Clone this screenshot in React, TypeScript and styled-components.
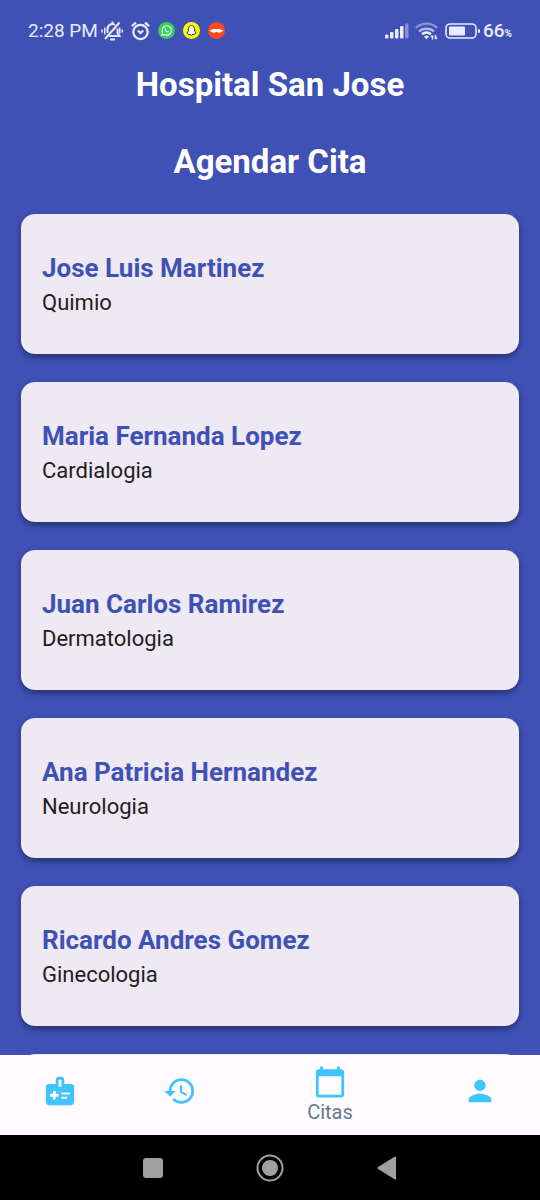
import React from 'react';
import styled, { createGlobalStyle } from 'styled-components';
import { MdCalendarToday, MdHistory, MdMedicalInformation, MdPerson } from 'react-icons/md';

const GlobalStyle = createGlobalStyle`
  * { box-sizing: border-box; }
  body {
    margin: 0;
    background: #3f51b5;
    font-family: Roboto, "Liberation Sans", sans-serif;
  }
  button { font: inherit; border: 0; background: none; padding: 0; cursor: pointer; }
`;

const Screen = styled.div`
  display: flex;
  flex-direction: column;
  height: 100vh;
  background: #3f51b5;
`;

const StatusBar = styled.header`
  display: flex;
  align-items: center;
  justify-content: space-between;
  height: 61px;
  padding: 0 28px;
  flex: none;
  color: #e8ebfb;
`;

const StatusGroup = styled.div<{ $gap: number }>`
  display: flex;
  align-items: center;
  gap: ${({ $gap }) => $gap}px;
  svg { display: block; flex: none; }
`;

const Clock = styled.time`
  font-size: 19px;
  line-height: 24px;
  font-weight: 400;
`;

const BatteryLevel = styled.span`
  font-size: 19px;
  line-height: 24px;
  font-weight: 500;
  small { font-size: 10px; line-height: 10px; font-weight: 700; }
`;

const Content = styled.main`
  flex: 1;
  min-height: 0;
  overflow-y: auto;
  scrollbar-width: none;
  padding: 4px 21px 28px;
`;

const Headings = styled.div`
  display: grid;
  gap: 37px;
  margin-bottom: 32px;
  text-align: center;
  color: #fff;
`;

const PageTitle = styled.h1`
  margin: 0;
  font-size: 33px;
  line-height: 40px;
  font-weight: 700;
`;

const DoctorList = styled.ul`
  display: grid;
  gap: 28px;
  margin: 0;
  padding: 0;
  list-style: none;
`;

const DoctorCard = styled.li`
  min-height: 140px;
  padding: 36px 21px 34px;
  border-radius: 14px;
  background: #eee9f3;
  box-shadow: 0 3px 6px rgba(0, 0, 0, 0.4);
`;

const DoctorName = styled.h2`
  margin: 0;
  font-size: 26px;
  line-height: 36px;
  font-weight: 700;
  color: #3f51b5;
`;

const Specialty = styled.p`
  margin: 0;
  font-size: 22px;
  line-height: 34px;
  color: #1f1d22;
`;

const TabBar = styled.nav`
  display: flex;
  flex: none;
  height: 80px;
  background: #fffbff;
`;

const Tab = styled.button<{ $active?: boolean }>`
  display: flex;
  flex: ${({ $active }) => ($active ? 3 : 2)} 0 0;
  flex-direction: column;
  align-items: center;
  justify-content: center;
  padding-bottom: ${({ $active }) => ($active ? 0 : 8)}px;
  color: #40c4ff;
`;

const TabLabel = styled.span`
  font-size: 20px;
  line-height: 26px;
  color: #607d8b;
`;

const SystemBar = styled.footer`
  display: flex;
  flex: none;
  justify-content: center;
  gap: 73px;
  height: 65px;
  background: #000;
`;

const SystemButton = styled.button`
  display: grid;
  place-items: center;
  width: 44px;
  color: #a0a0a0;
`;

const MutedBell = () => (
  <svg width="22" height="20" viewBox="0 0 22 20" fill="none" stroke="currentColor" strokeWidth="2">
    <path d="M6.500 12V8A4.800 4.800 0 0 1 14 4M16.500 7.500V12L18.500 15H8" />
    <path d="M4 18L18.500 1.500M9 18.500H14M11.500 0.500V3" />
    <path d="M1 8.500V11.500M3.800 6.500V13.500M18.700 6.500V12.500M21.200 8.500V11.500" strokeWidth="1.500" />
  </svg>
);

const AlarmClock = () => (
  <svg width="19" height="20" viewBox="0 0 19 20" fill="none" stroke="currentColor" strokeWidth="2.200">
    <circle cx="9.500" cy="11" r="7.200" />
    <path d="M0.800 5.200L5 1.600M18.200 5.200L14 1.600M6.800 9.500L9.500 12L12.200 9.500" />
  </svg>
);

const WhatsappBadge = () => (
  <svg width="17" height="17" viewBox="0 0 17 17">
    <circle cx="8.500" cy="8.500" r="8.500" fill="#35cd5c" />
    <path d="M3.800 13.200L4.600 10.600A4.700 4.700 0 1 1 6.400 12.500Z" fill="none" stroke="#fff" strokeWidth="1.100" />
    <path d="M6.700 6.200C6.200 8.400 8.600 10.900 10.700 10.500L11 9.500L9.800 8.900L9.200 9.400L7.700 7.900L8.100 7.300L7.500 6Z" fill="#fff" />
  </svg>
);

const SnapchatBadge = () => (
  <svg width="17" height="17" viewBox="0 0 17 17">
    <circle cx="8.500" cy="8.500" r="8.500" fill="#fffb08" />
    <path d="M8.500 3.500C6.700 3.500 5.600 4.800 5.600 6.300V7.500L4.800 7.700L5.500 8.700C5.200 9.900 4.700 10.500 3.800 10.900L5.200 11.700L5.600 12.500L7.100 12.400L8.500 13.200L9.900 12.400L11.400 12.500L11.800 11.700L13.200 10.900C12.300 10.500 11.800 9.900 11.500 8.700L12.200 7.700L11.400 7.500V6.300C11.400 4.800 10.300 3.500 8.500 3.500Z" fill="#fff" stroke="#222" strokeWidth="0.900" />
  </svg>
);

const MustacheBadge = () => (
  <svg width="17" height="17" viewBox="0 0 17 17">
    <circle cx="8.500" cy="8.500" r="8.500" fill="#fb4b1e" />
    <path d="M8.500 7.500C7.400 6.400 5.500 6.500 4.300 7.600C3.600 8.200 2.600 8.300 1.600 8C3 11 7.200 11.200 8.500 9.800C9.800 11.200 14 11 15.400 8C14.400 8.300 13.400 8.200 12.700 7.600C11.500 6.500 9.600 6.400 8.500 7.500Z" fill="#fff" />
  </svg>
);

const Signal = () => (
  <svg width="24" height="16" viewBox="0 0 24 16" fill="currentColor">
    <rect x="0" y="11.500" width="3.500" height="4" rx="1" />
    <rect x="5" y="9" width="3.500" height="6.500" rx="1" />
    <rect x="10" y="6" width="3.500" height="9.500" rx="1" />
    <rect x="15" y="3" width="3.500" height="12.500" rx="1" />
    <rect x="20" y="0.500" width="3.500" height="15" rx="1" opacity="0.400" />
  </svg>
);

const Wifi = () => (
  <svg width="24" height="18" viewBox="0 0 24 18" fill="none" stroke="currentColor" strokeWidth="2.200">
    <path d="M0.800 6A15.500 15.500 0 0 1 22.200 6" opacity="0.450" />
    <path d="M4 9.500A11 11 0 0 1 19 9.500" opacity="0.700" />
    <path d="M7 12.300A7 7 0 0 1 16 12.300" strokeWidth="2.600" />
    <path d="M9 14.500A4 4 0 0 1 14 14.500L11.500 17.200Z" fill="currentColor" stroke="none" />
    <path d="M17.500 17.500V13.500M16 15L17.500 13.500M20.500 13V17M20.500 17L22 15.500" strokeWidth="1.500" />
  </svg>
);

const Battery = () => (
  <svg width="35" height="16" viewBox="0 0 35 16">
    <rect x="1" y="1" width="30" height="14" rx="4" fill="none" stroke="currentColor" strokeWidth="1.600" />
    <rect x="4" y="3.500" width="16" height="9" rx="1" fill="currentColor" />
    <rect x="33" y="6" width="2" height="4" rx="1" fill="currentColor" />
  </svg>
);

const doctors = [
  { name: 'Jose Luis Martinez', specialty: 'Quimio' },
  { name: 'Maria Fernanda Lopez', specialty: 'Cardialogia' },
  { name: 'Juan Carlos Ramirez', specialty: 'Dermatologia' },
  { name: 'Ana Patricia Hernandez', specialty: 'Neurologia' },
  { name: 'Ricardo Andres Gomez', specialty: 'Ginecologia' },
];

export default function App() {
  return (
    <Screen>
      <GlobalStyle />
      <StatusBar>
        <StatusGroup $gap={8}>
          <StatusGroup $gap={3}>
            <Clock>2:28 PM</Clock>
            <MutedBell />
          </StatusGroup>
          <AlarmClock />
          <WhatsappBadge />
          <SnapchatBadge />
          <MustacheBadge />
        </StatusGroup>
        <StatusGroup $gap={6}>
          <Signal />
          <Wifi />
          <StatusGroup $gap={3}>
            <Battery />
            <BatteryLevel>66<small>%</small></BatteryLevel>
          </StatusGroup>
        </StatusGroup>
      </StatusBar>

      <Content>
        <Headings>
          <PageTitle>Hospital San Jose</PageTitle>
          <PageTitle as="h2">Agendar Cita</PageTitle>
        </Headings>
        <DoctorList>
          {doctors.map(({ name, specialty }) => (
            <DoctorCard key={name}>
              <DoctorName>{name}</DoctorName>
              <Specialty>{specialty}</Specialty>
            </DoctorCard>
          ))}
          <DoctorCard aria-hidden="true" />
        </DoctorList>
      </Content>

      <TabBar>
        <Tab aria-label="Expediente"><MdMedicalInformation size={34} /></Tab>
        <Tab aria-label="Historial"><MdHistory size={34} /></Tab>
        <Tab $active aria-current="page">
          <MdCalendarToday size={34} />
          <TabLabel>Citas</TabLabel>
        </Tab>
        <Tab aria-label="Perfil"><MdPerson size={34} /></Tab>
      </TabBar>

      <SystemBar>
        <SystemButton aria-label="Recientes">
          <svg width="20" height="20" viewBox="0 0 20 20" fill="currentColor"><rect width="20" height="20" rx="3" /></svg>
        </SystemButton>
        <SystemButton aria-label="Inicio">
          <svg width="28" height="28" viewBox="0 0 28 28">
            <circle cx="14" cy="14" r="12.500" fill="none" stroke="currentColor" strokeWidth="2" />
            <circle cx="14" cy="14" r="8" fill="currentColor" />
          </svg>
        </SystemButton>
        <SystemButton aria-label="Atrás">
          <svg width="20" height="24" viewBox="0 0 20 24" fill="currentColor"><path d="M18 0.500Q19 0 19 1.500V22.500Q19 24 18 23.500L1 13Q0 12 1 11Z" /></svg>
        </SystemButton>
      </SystemBar>
    </Screen>
  );
}
